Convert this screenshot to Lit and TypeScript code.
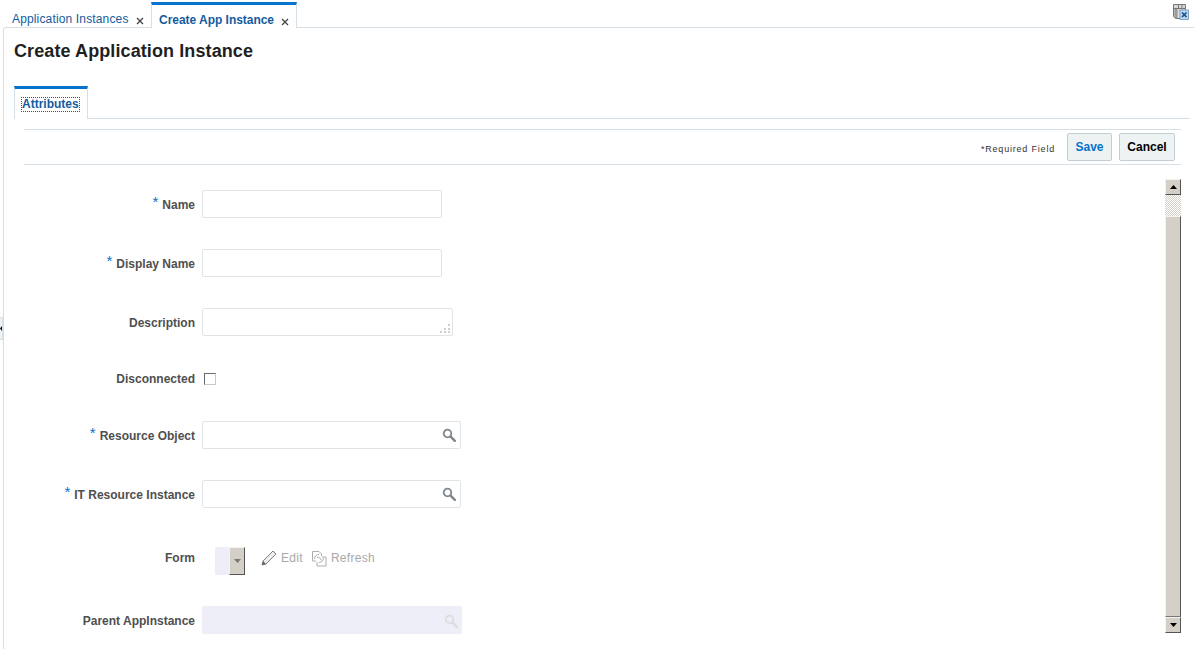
import { LitElement, html, css, svg } from "lit";
import { customElement } from "lit/decorators.js";

const search = (c: string) => svg`<svg class="mag" width="14" height="14" viewBox="0 0 14 14"><circle cx="5.5" cy="5.5" r="3.8" fill="none" stroke="${c}" stroke-width="1.8"/><path d="M8.4 8.4L12.8 12.8" stroke="${c}" stroke-width="2.4" stroke-linecap="round"/></svg>`;

@customElement("app-root")
export class AppRoot extends LitElement {
  static styles = css`
    :host { display: block; position: relative; width: 1194px; height: 649px; overflow: hidden; background: #fff; font-family: "Liberation Sans", Arial, sans-serif; font-size: 12px; color: #4f4f4f; }
    .top { display: flex; height: 28px; margin-bottom: -1px; position: relative; z-index: 1; box-sizing: border-box; }
    .tab { box-sizing: border-box; display: flex; align-items: flex-start; color: #145c9e; letter-spacing: .15px; line-height: 13px; }
    .tab1 { width: 151px; padding: 13px 0 0 12px; }
    .tab2 { width: 146px; margin-top: 2px; height: 26px; background: #fff; border: 1px solid #d6dfe6; border-top: 3px solid #0572ce; border-bottom: 0; padding: 9px 0 0 7px; font-weight: bold; letter-spacing: -.03px; }
    .x { margin-left: 7px; margin-top: 4px; display: block; }
    .tab2 .x { margin-left: 7px; margin-top: 4px; }
    .detach { position: absolute; left: 1172px; top: 3px; }
    .panel { margin-left: 3px; border-left: 1px solid #d6dfe6; border-top: 1px solid #d6dfe6; border-top-left-radius: 3px; height: 622px; box-sizing: border-box; }
    h1 { margin: 0; height: 58px; box-sizing: border-box; padding: 13px 0 0 10px; font-size: 18px; line-height: 20px; font-weight: bold; color: #1f1f1f; letter-spacing: .1px; }
    .subbar { margin-left: 10px; margin-right: 4px; height: 32px; border-bottom: 1px solid #d6dfe6; box-sizing: content-box; }
    .subtab { box-sizing: border-box; width: 74px; height: 33px; background: #fff; border: 1px solid #d6dfe6; border-top: 3px solid #0572ce; border-bottom: 0; display: flex; justify-content: flex-start; padding: 9px 0 0 7px; color: #145c9e; font-weight: bold; position: relative; }
    .subtab span { outline: 1px dotted #145c9e; line-height: 13px; height: 13px; }
    .toolbar { margin: 10px 13px 0 20px; height: 34px; border-top: 1px solid #d6dfe6; border-bottom: 1px solid #d6dfe6; display: flex; align-items: center; justify-content: flex-end; padding-right: 6px; box-sizing: content-box; }
    .req { font-size: 9px; letter-spacing: .8px; color: #333; margin-right: 12px; margin-top: 4px; }
    button { box-sizing: border-box; height: 28px; border: 1px solid #c4ced7; border-radius: 2px; background: #edf2f3; font: bold 12px "Liberation Sans", Arial, sans-serif; padding: 0; }
    .save { width: 45px; color: #0572ce; margin-right: 7px; }
    .cancel { width: 56px; color: #000; }
    .content { display: flex; margin-right: 13px; }
    .form { flex: 1; display: grid; grid-template-columns: 191px auto; grid-template-rows: 28px 28px 28px 23px 28px 28px 36px 28px; row-gap: 31px; justify-content: start; align-items: center; padding-top: 25px; column-gap: 7px; }
    .scroll { width: 16px; margin-top: 14px; height: 454px; display: flex; flex-direction: column; }
    label { text-align: right; font-weight: bold; white-space: nowrap; position: relative; top: 1px; }
    label.plain { top: 0; }
    .star { color: #0572ce; font-size: 15px; font-weight: normal; line-height: 1px; margin-right: 4px; position: relative; top: -2px; }
    .input { box-sizing: border-box; height: 28px; width: 240px; border: 1px solid #dfe4e8; border-radius: 2px; background: #fff; position: relative; }
    .area { width: 251px; }
    .grip { position: absolute; right: 1px; bottom: 1px; }
    .lov { width: 259px; }
    .mag { position: absolute; right: 4px; top: 6px; }
    .dis { width: 260px; background: #edeef7; border-color: #edeef7; }
    .dis .mag { right: 3px; top: 7px; }
    .chk { box-sizing: border-box; width: 12px; height: 12px; margin-left: 2px; border: 1px solid; border-color: #6a6a6a #c8c8c8 #c8c8c8 #6a6a6a; background: #fff; }
    .formrow { display: flex; align-items: center; height: 36px; margin-left: 13px; color: #a3a3a3; }
    .sel { box-sizing: border-box; width: 30px; height: 28px; align-self: flex-end; background: #edeef7; border-radius: 2px; display: flex; justify-content: flex-end; }
    .arrowbtn { box-sizing: border-box; width: 16px; height: 28px; background: #d4d0c8; border: 1px solid; border-color: #f4f3ef #555 #555 #f4f3ef; display: flex; align-items: center; justify-content: center; }
    .act { display: flex; align-items: center; margin-left: 16px; margin-top: 2px; color: #a8a8a8; letter-spacing: .3px; }
    .act svg { margin-right: 4px; }
    .act + .act { margin-left: 8px; }
    .sb { box-sizing: border-box; width: 16px; height: 16px; background: #d4d0c8; border: 1px solid; border-color: #f4f3ef #555 #555 #f4f3ef; display: flex; align-items: center; justify-content: center; flex: none; }
    .track { height: 21px; flex: none; background: repeating-conic-gradient(#d4d0c8 0 25%, #fff 0 50%) 0 0 / 2px 2px; }
    .thumb { flex: 1; background: #d4d0c8; border: 1px solid; border-color: #f4f3ef #555 #555 #f4f3ef; border-bottom-color: #777; box-sizing: border-box; }
    .handle { position: absolute; left: 0; top: 317px; width: 3px; height: 23px; background: #edf2f3; border: 1px solid #d6dfe6; border-left: 0; box-sizing: border-box; display: flex; align-items: center; }
  `;

  private row(label: string, req: boolean, field: unknown) {
    return html`<label>${req ? html`<span class="star">*</span>` : ""}${label}</label>${field}`;
  }

  render() {
    const x = html`<svg class="x" width="8" height="8" viewBox="0 0 8 8"><path d="M1 1L7 7M7 1L1 7" stroke="#444" stroke-width="1.3"/></svg>`;
    const grip = html`<svg class="grip" width="13" height="11" viewBox="0 0 13 11" fill="#cfcfcf"><rect x="10" y="1" width="2" height="2"/><rect x="6" y="5" width="2" height="2"/><rect x="10" y="5" width="2" height="2"/><rect x="2" y="8" width="2" height="2"/><rect x="6" y="8" width="2" height="2"/><rect x="10" y="8" width="2" height="2"/></svg>`;
    return html`
      <div class="top">
        <div class="tab tab1"><span>Application Instances</span>${x}</div>
        <div class="tab tab2"><span>Create App Instance</span>${x}</div>
        <svg class="detach" width="17" height="17" viewBox="0 0 17 17">
          <path d="M1.5 1.5H13.5V15.5H3.5L1.5 13.5Z" fill="#d8d8d8" stroke="#777"/>
          <path d="M2 5.5H13" stroke="#777"/><path d="M6.5 1.5V5.5M10 1.5V5.5" stroke="#777"/>
          <rect x="2.5" y="6" width="3" height="9" fill="#9a9a9a"/>
          <rect x="8" y="7" width="8.5" height="9.5" fill="#bcd6ee" stroke="#6f95b8" stroke-width=".8"/>
          <path d="M10 9.5L14.5 14M14.5 9.5L10 14" stroke="#174f8c" stroke-width="1.7"/>
        </svg>
      </div>
      <div class="panel">
        <h1>Create Application Instance</h1>
        <div class="subbar"><div class="subtab"><span>Attributes</span></div></div>
        <div class="toolbar">
          <span class="req">*Required Field</span>
          <button class="save">Save</button><button class="cancel">Cancel</button>
        </div>
        <div class="content">
          <div class="form">
            ${this.row("Name", true, html`<div class="input"></div>`)}
            ${this.row("Display Name", true, html`<div class="input"></div>`)}
            ${this.row("Description", false, html`<div class="input area">${grip}</div>`)}
            <label class="plain">Disconnected</label><div class="chk"></div>
            ${this.row("Resource Object", true, html`<div class="input lov">${search("#7d868c")}</div>`)}
            ${this.row("IT Resource Instance", true, html`<div class="input lov">${search("#7d868c")}</div>`)}
            ${this.row("Form", false, html`<div class="formrow">
              <div class="sel"><div class="arrowbtn"><svg width="7" height="4" viewBox="0 0 7 4"><path d="M0 0H7L3.5 4Z" fill="#777"/></svg></div></div>
              <span class="act"><svg width="16" height="16" viewBox="0 0 16 16"><path d="M1 15L2 11L12 1L15 4L5 14Z" fill="#eeeeee" stroke="#808080"/><path d="M1 15L2 11L5 14Z" fill="#666"/></svg>Edit</span>
              <span class="act"><svg width="16" height="17" viewBox="0 0 16 17" fill="none" stroke="#aeaeae"><path d="M1.5 1.5H8L10.5 4V6"/><path d="M1.5 1.5V11H5"/><path d="M6 16H15V7H11"/><path d="M6 16V12"/><path d="M3.5 9A4.5 4.5 0 0 1 8 4.5"/><path d="M8 12.5A4.5 4.5 0 0 0 12.5 8"/><path d="M6 7.5A3 3 0 0 1 10 10"/></svg>Refresh</span>
            </div>`)}
            ${this.row("Parent AppInstance", false, html`<div class="input dis">${search("#dcdcdc")}</div>`)}
          </div>
          <div class="scroll">
            <div class="sb"><svg width="7" height="4" viewBox="0 0 7 4"><path d="M0 4H7L3.5 0Z" fill="#000"/></svg></div>
            <div class="track"></div>
            <div class="thumb"></div>
            <div class="sb"><svg width="7" height="4" viewBox="0 0 7 4"><path d="M0 0H7L3.5 4Z" fill="#000"/></svg></div>
          </div>
        </div>
      </div>
      <div class="handle"><svg width="2" height="5" viewBox="0 0 2 5"><path d="M2 0V5L0 2.5Z" fill="#000"/></svg></div>
    `;
  }
}
